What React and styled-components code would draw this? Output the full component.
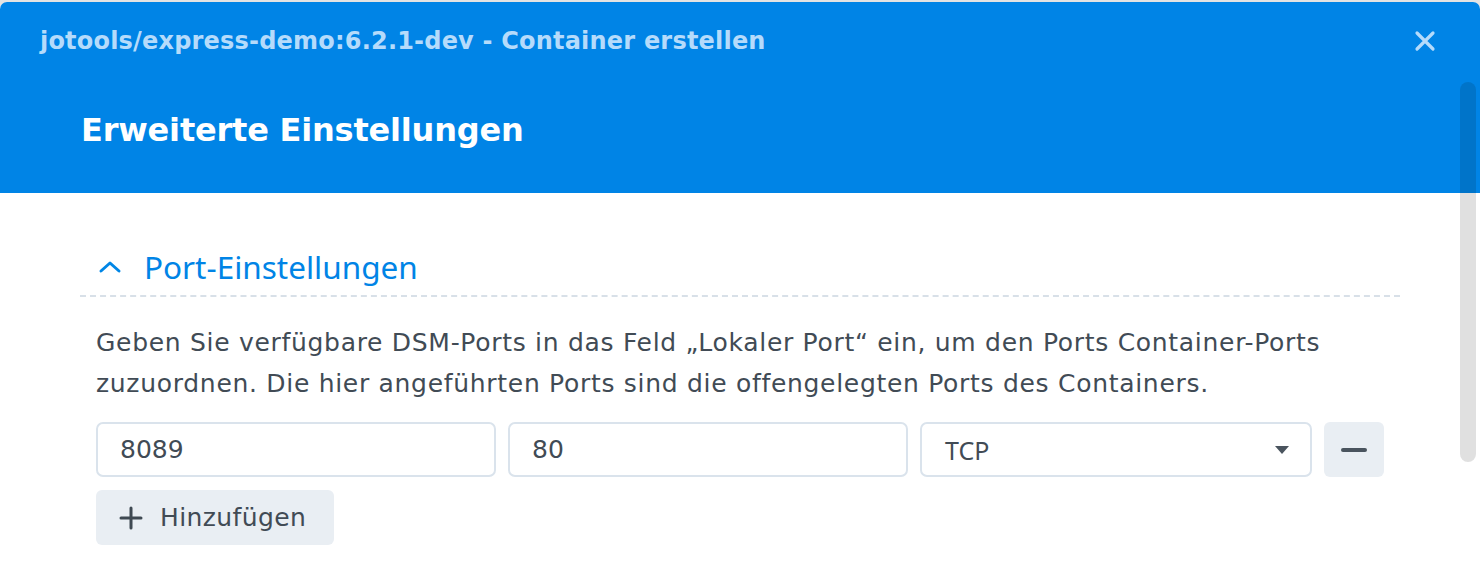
import React from "react"
import styled, { createGlobalStyle } from "styled-components"

const Global = createGlobalStyle`
  html, body {
    margin: 0;
    padding: 0;
    background: #e3e3e3;
    overflow: hidden;
  }
  body {
    font-family: "DejaVu Sans", Verdana, sans-serif;
  }
`

const App = () => {
  return (
    <>
      <Global />
      <Dialog>
        <Header>
          <TopBar>
            <Title>jotools/express-demo:6.2.1-dev - Container erstellen</Title>
            <Close aria-label="close">
              <svg width="22" height="22" viewBox="0 0 22 22">
                <path d="M3 3 L19 19 M19 3 L3 19" stroke="#b5dbfb" strokeWidth="3.2" strokeLinecap="round" />
              </svg>
            </Close>
          </TopBar>
          <Heading>Erweiterte Einstellungen</Heading>
        </Header>
        <Body>
          <Section>
            <SectionHead>
              <svg width="24" height="14" viewBox="0 0 24 14">
                <path d="M3 11 L12 3 L21 11" fill="none" stroke="#0086e6" strokeWidth="3" strokeLinecap="round" strokeLinejoin="round" />
              </svg>
              <SectionTitle>Port-Einstellungen</SectionTitle>
            </SectionHead>
            <Content>
              <Text>
                Geben Sie verfügbare DSM-Ports in das Feld „Lokaler Port“ ein, um den Ports Container-Ports<br />
                zuzuordnen. Die hier angeführten Ports sind die offengelegten Ports des Containers.
              </Text>
              <Row>
                <Field value="8089" readOnly />
                <Field value="80" readOnly />
                <Select>
                  <span>TCP</span>
                  <svg width="16" height="10" viewBox="0 0 16 10">
                    <path d="M1 1 L15 1 L8 9 Z" fill="#4a545e" />
                  </svg>
                </Select>
                <IconButton aria-label="remove">
                  <svg width="26" height="4" viewBox="0 0 26 4">
                    <rect x="0" y="0" width="26" height="4" rx="2" fill="#4a545e" />
                  </svg>
                </IconButton>
              </Row>
              <AddButton>
                <svg width="24" height="24" viewBox="0 0 24 24">
                  <path d="M12 2 V22 M2 12 H22" stroke="#3f4952" strokeWidth="3" strokeLinecap="round" />
                </svg>
                Hinzufügen
              </AddButton>
            </Content>
          </Section>
        </Body>
        <Scrollbar>
          <Thumb />
        </Scrollbar>
      </Dialog>
    </>
  )
}

export default App

const Dialog = styled.div`
  position: relative;
  margin-top: 2px;
  height: 572px;
  background: #fff;
  border-top-left-radius: 7px;
  border-top-right-radius: 7px;
  overflow: hidden;
`
const Header = styled.div`
  background: #0084e6;
  height: 191px;
  display: flex;
  flex-direction: column;
`
const TopBar = styled.div`
  height: 78px;
  display: flex;
  align-items: center;
  justify-content: space-between;
  padding: 0 44px 0 40px;
`
const Title = styled.div`
  font-weight: 700;
  font-size: 24px;
  letter-spacing: 0.2px;
  line-height: 30px;
  color: #b5dbfb;
`
const Close = styled.button`
  border: 0;
  background: none;
  padding: 0;
  display: flex;
  cursor: pointer;
`
const Heading = styled.h1`
  margin: 0;
  padding: 30px 0 0 81px;
  font-weight: 700;
  font-size: 32px;
  letter-spacing: -0.2px;
  line-height: 40px;
  color: #fff;
`
const Body = styled.div`
  padding: 54px 80px 0 80px;
`
const Section = styled.div`
  width: 1320px;
`
const SectionHead = styled.div`
  display: flex;
  align-items: center;
  gap: 22px;
  height: 40px;
  padding: 0 0 8px 18px;
  border-bottom: 2px dashed #d8e0e8;
`
const SectionTitle = styled.div`
  font-family: "Noto Sans", sans-serif;
  font-size: 31.5px;
  line-height: 40px;
  color: #0084e6;
`
const Content = styled.div`
  padding: 25px 0 0 16px;
  display: flex;
  flex-direction: column;
  align-items: flex-start;
`
const Text = styled.p`
  margin: 0;
  font-size: 25px;
  letter-spacing: 0.7px;
  line-height: 41px;
  color: #414b55;
  white-space: nowrap;
`
const Row = styled.div`
  display: flex;
  gap: 12px;
  margin-top: 18px;
`
const Field = styled.input`
  box-sizing: border-box;
  width: 400px;
  height: 55px;
  border: 2px solid #dae3ec;
  border-radius: 7px;
  padding: 0 22px;
  font-family: "DejaVu Sans", sans-serif;
  font-size: 25px;
  color: #414b55;
  outline: none;
`
const Select = styled.div`
  box-sizing: border-box;
  width: 392px;
  height: 55px;
  border: 2px solid #dae3ec;
  border-radius: 7px;
  padding: 0 20px 0 23px;
  display: flex;
  align-items: center;
  justify-content: space-between;
  font-family: "Noto Sans", sans-serif;
  font-size: 25px;
  color: #414b55;
`
const IconButton = styled.button`
  width: 60px;
  height: 55px;
  border: 0;
  border-radius: 6px;
  background: #e9eef3;
  display: flex;
  align-items: center;
  justify-content: center;
  cursor: pointer;
`
const AddButton = styled.button`
  margin-top: 13px;
  height: 55px;
  padding: 0 28px 0 23px;
  border: 0;
  border-radius: 6px;
  background: #e9eef3;
  display: flex;
  align-items: center;
  gap: 17px;
  font-family: "DejaVu Sans", sans-serif;
  font-size: 25px;
  letter-spacing: 0.4px;
  color: #414b55;
  cursor: pointer;
`
const Scrollbar = styled.div`
  position: absolute;
  top: 80px;
  right: 4px;
  width: 16px;
  height: 380px;
`
const Thumb = styled.div`
  height: 100%;
  border-radius: 8px;
  background: linear-gradient(to bottom, #0074c9 0, #0074c9 111px, #e0e0e0 111px);
`
